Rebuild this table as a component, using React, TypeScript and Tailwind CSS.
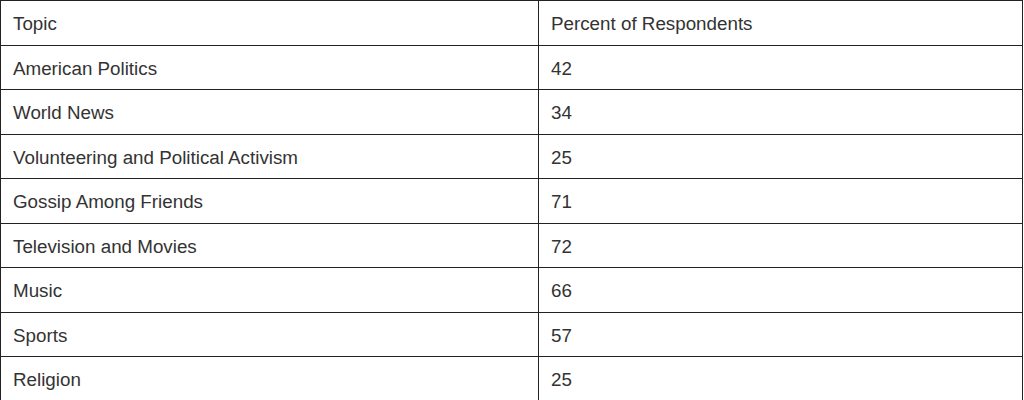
import React from "react";

const rows: [string, string][] = [
  ["Topic", "Percent of Respondents"],
  ["American Politics", "42"],
  ["World News", "34"],
  ["Volunteering and Political Activism", "25"],
  ["Gossip Among Friends", "71"],
  ["Television and Movies", "72"],
  ["Music", "66"],
  ["Sports", "57"],
  ["Religion", "25"],
];

export default function App() {
  return (
    <div className="w-[1024px] h-[400px] overflow-hidden bg-white">
      <div
        className="w-[1023px] border-l border-t border-r border-[#222] text-[#333] text-[18.8px]"
        style={{ fontFamily: '"Liberation Sans", Arial, sans-serif' }}
      >
        {rows.map(([a, b], i) => (
          <div
            key={i}
            className={`flex border-b border-[#222] box-border ${i % 2 === 0 ? "h-[45px]" : "h-[44px]"}`}
          >
            <div className="w-[538px] shrink-0 border-r border-[#222] box-border flex items-center pl-3 pt-[3px]">
              {a}
            </div>
            <div className="flex-1 flex items-center pl-3 pt-[3px]">{b}</div>
          </div>
        ))}
      </div>
    </div>
  );
}
